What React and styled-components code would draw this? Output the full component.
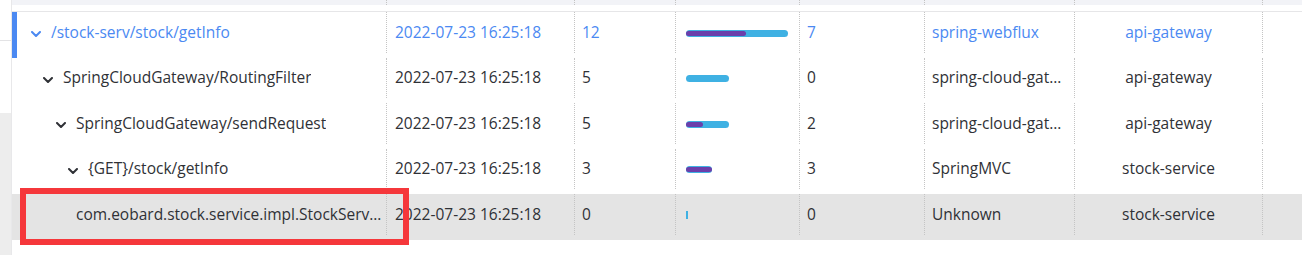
import React from "react";
import styled, { createGlobalStyle } from "styled-components";

const GlobalStyle = createGlobalStyle`
  html, body {
    margin: 0;
    padding: 0;
    background: #fff;
  }
  body {
    font-family: "Open Sans", "Noto Sans", sans-serif;
    font-size: 15.5px;
    color: #2f3136;
  }
`;

const COLUMNS = "375px 188px 101px 124px 125px 150px 188px 1fr";
const BAR_UNIT = 8.5;
const ACTIVE_BLUE = "#4b89f2";

const spans = [
  {
    id: 1,
    indent: 19,
    expandable: true,
    name: "/stock-serv/stock/getInfo",
    start: "2022-07-23 16:25:18",
    total: 12,
    self: 7,
    component: "spring-webflux",
    service: "api-gateway",
    active: true,
  },
  {
    id: 2,
    indent: 31,
    expandable: true,
    name: "SpringCloudGateway/RoutingFilter",
    start: "2022-07-23 16:25:18",
    total: 5,
    self: 0,
    component: "spring-cloud-gateway",
    service: "api-gateway",
  },
  {
    id: 3,
    indent: 44,
    expandable: true,
    name: "SpringCloudGateway/sendRequest",
    start: "2022-07-23 16:25:18",
    total: 5,
    self: 2,
    component: "spring-cloud-gateway",
    service: "api-gateway",
  },
  {
    id: 4,
    indent: 56,
    expandable: true,
    name: "{GET}/stock/getInfo",
    start: "2022-07-23 16:25:18",
    total: 3,
    self: 3,
    component: "SpringMVC",
    service: "stock-service",
  },
  {
    id: 5,
    indent: 64,
    expandable: false,
    name: "com.eobard.stock.service.impl.StockServiceImpl.getInfo",
    start: "2022-07-23 16:25:18",
    total: 0,
    self: 0,
    component: "Unknown",
    service: "stock-service",
    hover: true,
  },
];

const Page = styled.div`
  position: relative;
  display: flex;
  width: 1302px;
  height: 255px;
  overflow: hidden;
`;

const Sidebar = styled.div`
  width: 11px;
  flex-shrink: 0;
  display: flex;
  flex-direction: column;
  border-right: 1px solid #e8e8ea;
`;

const SideTop = styled.div`
  height: 40px;
  border-bottom: 1px solid #e3e3e5;
`;

const SideMid = styled.div`
  height: 72px;
`;

const SideFoot = styled.div`
  flex: 1;
  background: #ededed;
`;

const Main = styled.div`
  flex: 1;
  min-width: 0;
  display: flex;
  flex-direction: column;
`;

const Head = styled.div`
  padding-bottom: 6px;
  border-bottom: 1px solid #e6e6e8;
`;

const HeadBand = styled.div`
  display: grid;
  grid-template-columns: ${COLUMNS};
  height: 5px;
  background: #f2f3f7;
`;

const HeadCell = styled.div`
  border-right: 1px dotted #c4c4c4;

  &:last-child {
    border-right: none;
  }
`;

const Row = styled.div`
  display: grid;
  grid-template-columns: ${COLUMNS};
  height: 45.5px;
  background: ${(p) => (p.$hover ? "#e4e4e4" : "#fff")};
  box-shadow: ${(p) => (p.$active ? `inset 5px 0 0 ${ACTIVE_BLUE}` : "none")};
  color: ${(p) => (p.$active ? ACTIVE_BLUE : "#2f3136")};
`;

const Cell = styled.div`
  display: flex;
  align-items: center;
  justify-content: ${(p) => (p.$center ? "center" : "flex-start")};
  min-width: 0;
  margin-bottom: 5px;
  padding: 0 ${(p) => p.$right ?? 8}px 0 ${(p) => p.$pad ?? 8}px;
  border-right: 1px dotted #c4c4c4;
  white-space: nowrap;

  &:last-child {
    border-right: none;
  }
`;

const Label = styled.span`
  overflow: hidden;
  text-overflow: ellipsis;
  white-space: nowrap;
  margin-top: -1px;
`;

const Chevron = styled.svg`
  flex-shrink: 0;
  width: 10px;
  height: 6px;
  margin: 4px 10px 0 0;
`;

const Track = styled.div`
  display: flex;
  align-items: center;
  height: 7px;
  border-radius: 4px;
  background: #3fb1e3;
  min-width: 2px;
  margin-top: 2px;
`;

const SelfBar = styled.div`
  height: 5px;
  border-radius: 3px;
  background: #6b3fab;
`;

const Tick = styled.div`
  width: 2px;
  height: 8px;
  background: #3fb1e3;
  margin-top: 2px;
`;

const Marker = styled.div`
  position: absolute;
  left: 20px;
  top: 188px;
  width: 389px;
  height: 57px;
  box-sizing: border-box;
  border: 6px solid #f5373b;
  pointer-events: none;
`;

const ExpandIcon = () => (
  <Chevron viewBox="0 0 10 6">
    <path
      d="M1 1 L5 5 L9 1"
      fill="none"
      stroke="currentColor"
      strokeWidth="2"
      strokeLinecap="round"
      strokeLinejoin="round"
    />
  </Chevron>
);

const Duration = ({ total, self }) => {
  if (total === 0) return <Tick />;
  return (
    <Track style={{ width: total * BAR_UNIT }}>
      {self > 0 && <SelfBar style={{ width: self * BAR_UNIT }} />}
    </Track>
  );
};

const App = () => {
  return (
    <>
      <GlobalStyle />
      <Page>
        <Sidebar>
          <SideTop />
          <SideMid />
          <SideFoot />
        </Sidebar>
        <Main>
          <Head>
            <HeadBand>
              {Array.from({ length: 8 }).map((_, i) => (
                <HeadCell key={i} />
              ))}
            </HeadBand>
          </Head>
          {spans.map((s) => (
            <Row key={s.id} $active={s.active} $hover={s.hover}>
              <Cell $pad={s.indent} $right={3}>
                {s.expandable && <ExpandIcon />}
                <Label>{s.name}</Label>
              </Cell>
              <Cell>
                <Label>{s.start}</Label>
              </Cell>
              <Cell $pad={7}>
                <Label>{s.total}</Label>
              </Cell>
              <Cell $pad={10}>
                <Duration total={s.total} self={s.self} />
              </Cell>
              <Cell $pad={7}>
                <Label>{s.self}</Label>
              </Cell>
              <Cell $pad={7}>
                <Label>{s.component}</Label>
              </Cell>
              <Cell $center>
                <Label>{s.service}</Label>
              </Cell>
              <Cell />
            </Row>
          ))}
        </Main>
        <Marker />
      </Page>
    </>
  );
};

export default App;
